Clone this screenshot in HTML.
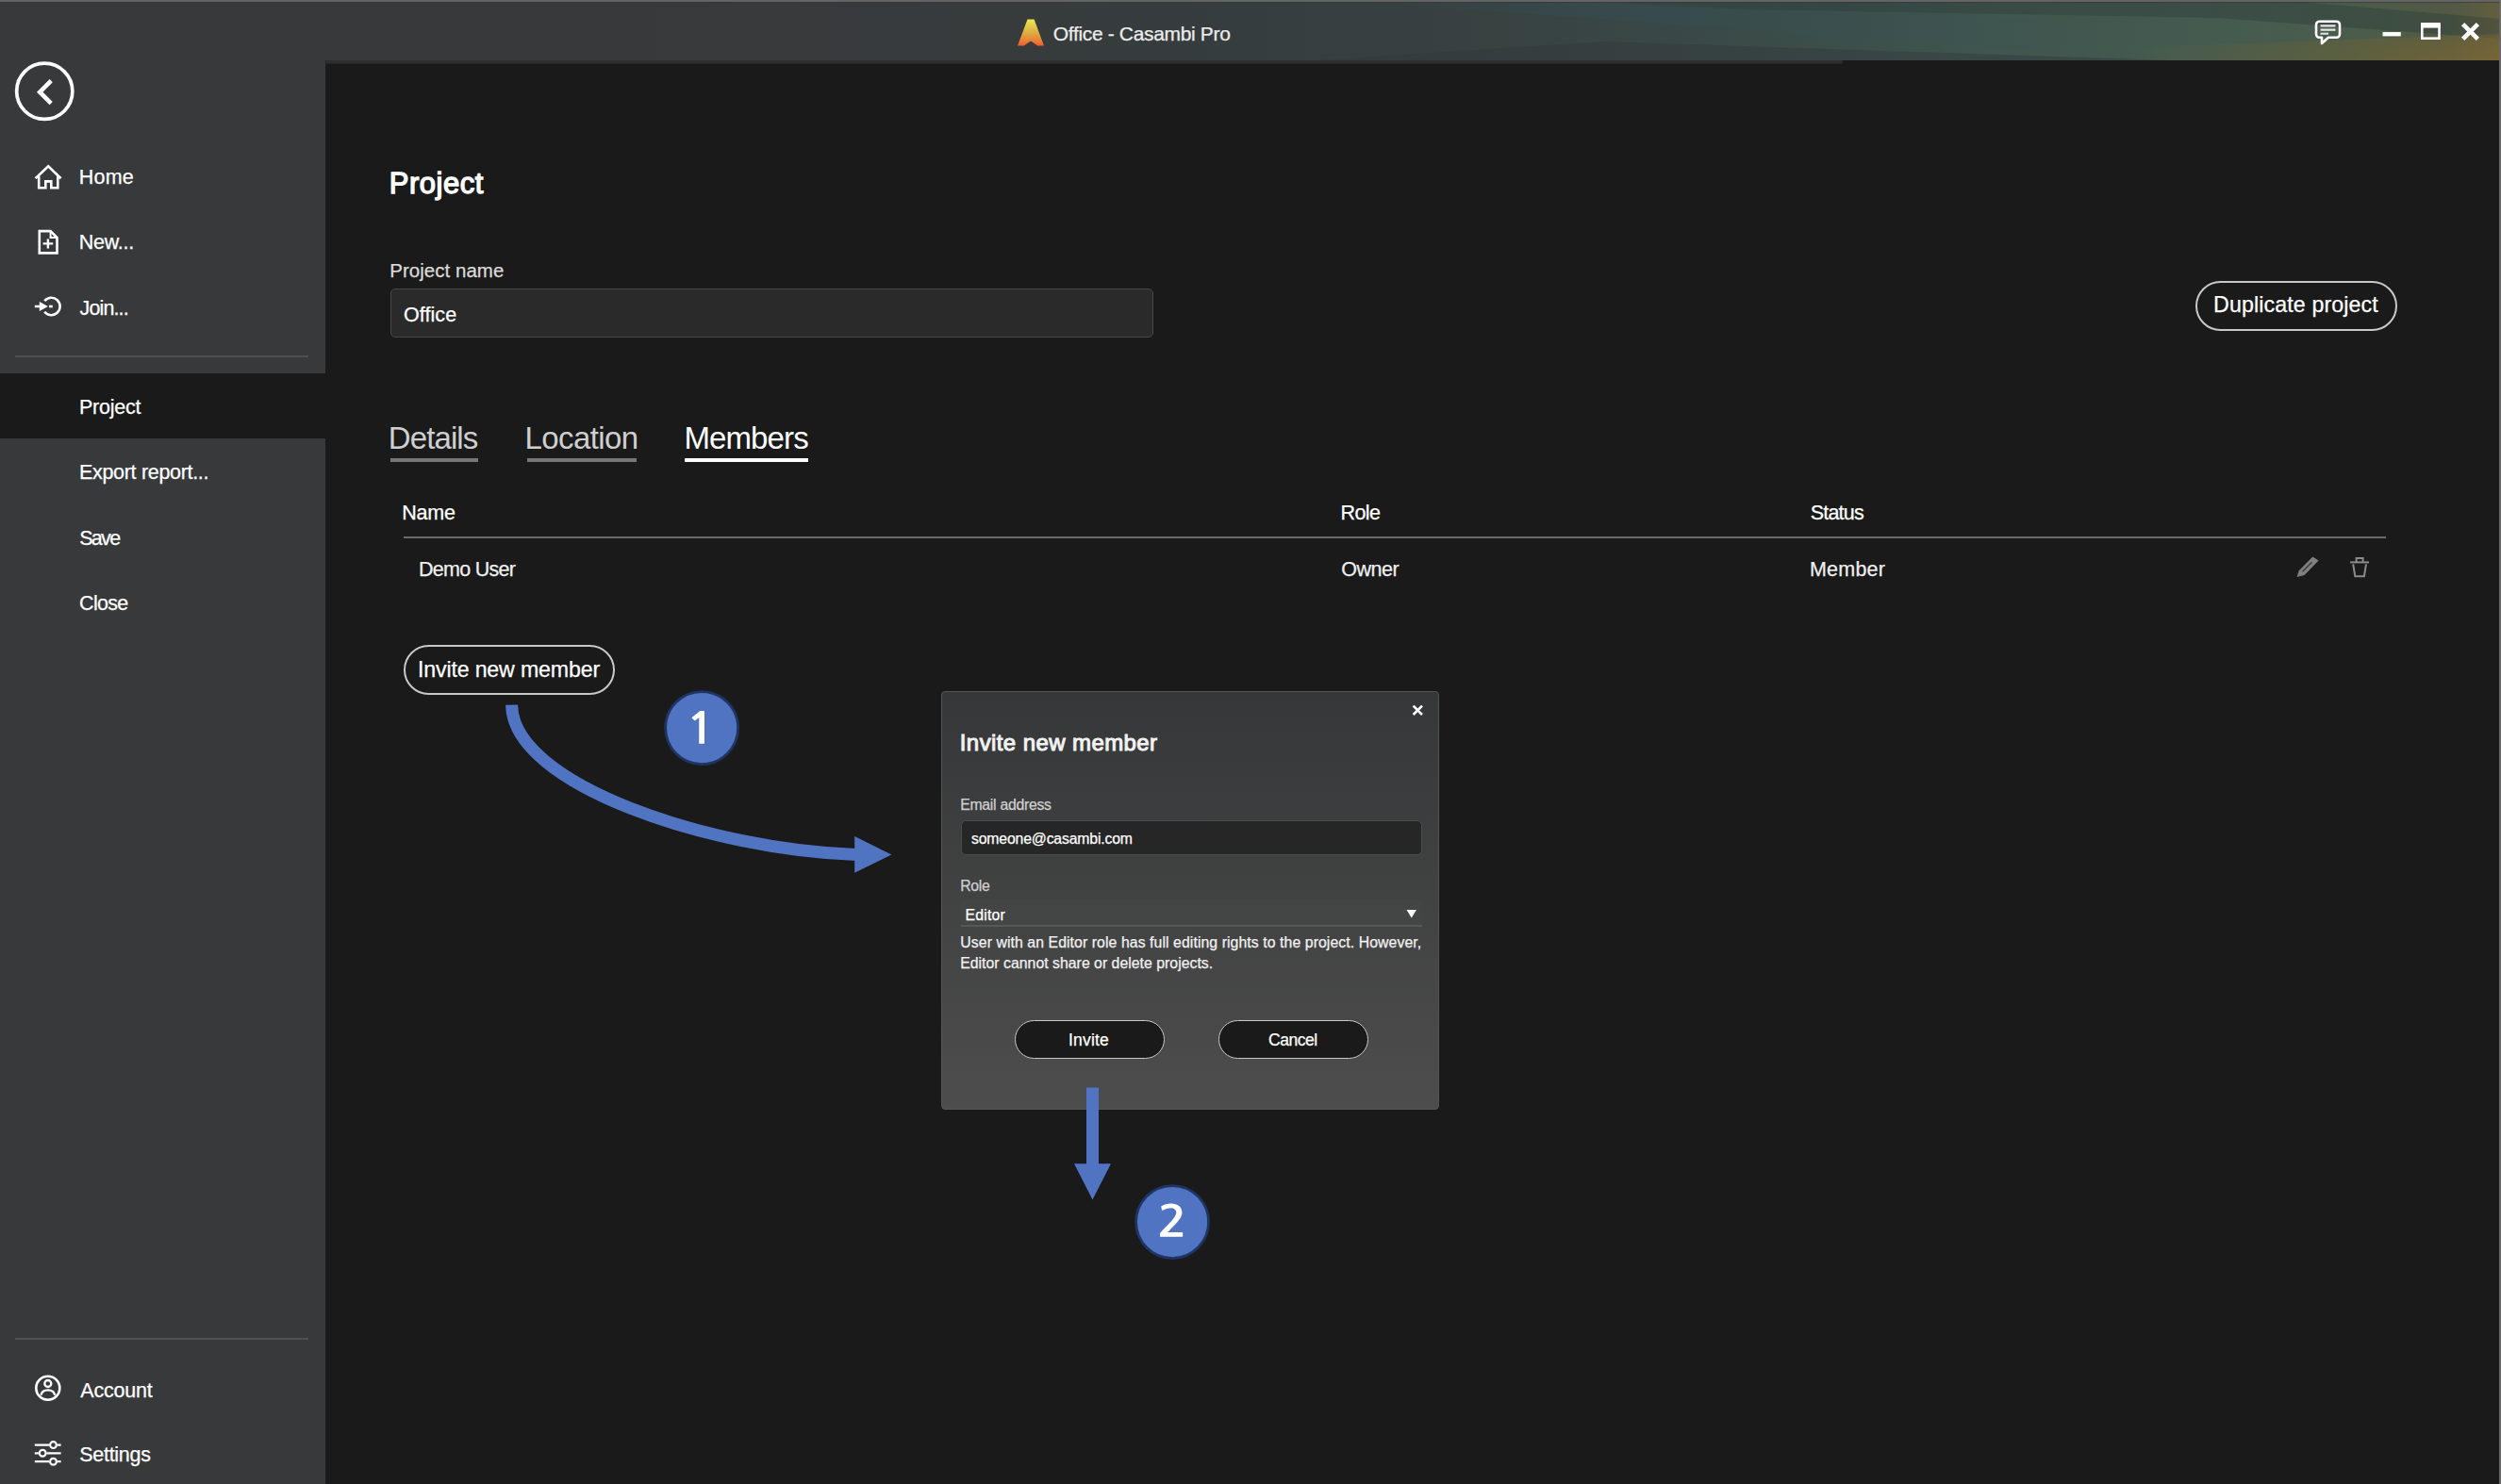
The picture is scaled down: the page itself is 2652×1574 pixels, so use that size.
<!DOCTYPE html>
<html lang="en"><head><meta charset="utf-8"><title>Office - Casambi Pro</title>
<style>
*{box-sizing:border-box}
html,body{margin:0;padding:0}
body{width:2652px;height:1574px;overflow:hidden;background:#1a1a1a;position:relative;font-family:"Liberation Sans", sans-serif;color:#fff}
.abs,.t,svg.ov{position:absolute}
.t{white-space:nowrap;line-height:1;-webkit-text-stroke:0.25px currentColor}
.grp{position:absolute;left:0;top:0;width:0;height:0}
#rborder{left:2649.7px;top:0;width:2.3px;height:1574px;background:#686868}
.lt{-webkit-text-stroke:0}
.sb1{-webkit-text-stroke:1.3px currentColor}
.sb2{-webkit-text-stroke:1px currentColor}
.num{-webkit-text-stroke:0;font-family:NanumGothic,"Liberation Sans",sans-serif;font-weight:bold;font-size:44.6px;transform:scaleX(1.18);transform-origin:0 0}
.sep{height:2px;background:#4f4f50}
.pill{border:2px solid #c9c9c9;border-radius:40px;background:#1a1a1a}
.inp{background:#2a2a2a;border:1.5px solid #484848;border-radius:5px}
</style></head>
<body>
<nav id="sidebar" class="grp" aria-label="Backstage menu">
<div class="abs bg" style="left:0;top:0;width:344.5px;height:1574px;background:#38393b"></div>
<div class="abs sel" style="left:0;top:396px;width:344.5px;height:68.5px;background:#1a1a1a"></div>
<div class="abs sep" style="left:16px;top:377px;width:311px"></div>
<div class="abs sep" style="left:16px;top:1419px;width:311px"></div>
<svg class="ov" style="left:0;top:60px" width="120" height="1514" viewBox="0 60 120 1514">
<g fill="none" stroke="#fff" stroke-width="2.6">
<circle cx="47.25" cy="96.8" r="29.6" stroke-width="3.7"/>
<path d="M54.2,85.7L42.2,97.7L54.2,109.7" stroke-width="4.6"/>
<path d="M37.6,189.2L51.2,176.2L64.6,189.2" stroke-linejoin="miter"/>
<path d="M41.2,186.5V199.3H48.3V192.4H54.3V199.3H61.3V186.5"/>
<path d="M41.8,245.1H53.6L60.5,252V268.4H41.8Z" stroke-linejoin="miter"/>
<path d="M53.6,245.1V252H60.5" stroke-width="2"/>
<path d="M45.6,258.4H56.2M50.9,253.4V263.6" stroke-width="2.4"/>
<path d="M47.2,319.3A9.2,9.2 0 1 1 47.2,330.7"/>
<path d="M36.8,325H44" stroke-width="2.5"/>
<circle cx="50.8" cy="1472.2" r="12.5"/>
<circle cx="50.8" cy="1467.5" r="3.5" stroke-width="2.3"/>
<path d="M43.4,1479.8C44.2,1476.2 47,1474.4 50.8,1474.4C54.6,1474.4 57.4,1476.2 58.2,1479.8" stroke-width="2.3"/>
<path d="M36.8,1532.6H52M61,1532.6H64.6M36.8,1541.3H40.8M49.6,1541.3H64.6M36.8,1550.2H52M61,1550.2H64.6" stroke-width="2.3"/>
<circle cx="56.5" cy="1532.6" r="3.4" stroke-width="2.2"/>
<circle cx="45.2" cy="1541.3" r="3.4" stroke-width="2.2"/>
<circle cx="56.5" cy="1550.2" r="3.4" stroke-width="2.2"/>
</g>
<path d="M41.8,319.9L50.9,325L41.8,330.1Z" fill="#fff"/>
<rect x="52" y="323.7" width="3.8" height="2.6" fill="#fff"/>
</svg>
<span class="t" style="left:83.8px;top:178.4px;font-size:21.5px;letter-spacing:0.197px">Home</span>
<span class="t" style="left:83.8px;top:247.3px;font-size:21.5px;letter-spacing:-0.282px">New...</span>
<span class="t" style="left:84.6px;top:316.7px;font-size:21.5px;letter-spacing:-0.890px">Join...</span>
<span class="t" style="left:84.0px;top:421.9px;font-size:21.5px;letter-spacing:-0.240px">Project</span>
<span class="t" style="left:84.0px;top:491.3px;font-size:21.5px;letter-spacing:-0.317px">Export report...</span>
<span class="t" style="left:84.2px;top:560.5px;font-size:21.5px;letter-spacing:-1.695px">Save</span>
<span class="t" style="left:84.1px;top:629.5px;font-size:21.5px;letter-spacing:-0.697px">Close</span>
<span class="t" style="left:85.3px;top:1464.7px;font-size:21.5px;letter-spacing:-0.201px">Account</span>
<span class="t" style="left:84.3px;top:1533.4px;font-size:21.5px;letter-spacing:-0.300px">Settings</span>
</nav>
<main id="main" class="grp">
<div class="abs bg" style="left:344.5px;top:64px;width:2305.2px;height:1510px;background:#1a1a1a"></div>
<div class="abs inp" style="left:413.5px;top:306px;width:809px;height:52px"></div>
<div class="abs tabline" style="left:413.6px;top:486px;width:93.4px;height:3.6px;background:#777"></div>
<div class="abs tabline" style="left:559px;top:486px;width:116px;height:3.6px;background:#777"></div>
<div class="abs tabline" style="left:726.4px;top:486px;width:130.2px;height:3.6px;background:#fff"></div>
<div class="abs rule" style="left:427.6px;top:569px;width:2102px;height:1.6px;background:#6a6a6a"></div>
<div class="abs pill" style="left:2328px;top:297.5px;width:214px;height:53.5px"></div>
<div class="abs pill" style="left:427.5px;top:684px;width:224.5px;height:53px"></div>
<svg class="ov" style="left:2420px;top:580px" width="110" height="44" viewBox="2420 580 110 44">
<path d="M2435.5,612L2437.8,605.2L2452.3,590.6L2458.6,594.6L2443.5,610Z" fill="#808080"/>
<path d="M2441.5,606.2L2451.5,596.2" stroke="#3a3a3a" stroke-width="1.4"/>
<g fill="none" stroke="#8c8c8c" stroke-width="2">
<path d="M2492.1,596.4H2512"/>
<path d="M2498.6,596V592H2505.6V596"/>
<path d="M2495.2,598.4L2497.3,611.2H2506.9L2509,598.4"/>
</g>
</svg>
<span class="t sb1" style="left:412.8px;top:179.2px;font-size:31px;letter-spacing:0.504px">Project</span>
<span class="t" style="left:413.3px;top:276.7px;font-size:20.5px;letter-spacing:0.020px;color:#dcdcdc">Project name</span>
<span class="t" style="left:428.0px;top:323.8px;font-size:21.5px;letter-spacing:0.068px">Office</span>
<span class="t lt" style="left:411.8px;top:448.0px;font-size:33px;letter-spacing:-0.903px;color:#cfcfcf">Details</span>
<span class="t lt" style="left:556.4px;top:448.0px;font-size:33px;letter-spacing:-0.565px;color:#cfcfcf">Location</span>
<span class="t lt" style="left:725.4px;top:448.0px;font-size:33px;letter-spacing:-0.869px">Members</span>
<span class="t" style="left:426.3px;top:534.0px;font-size:21.5px;letter-spacing:-0.203px">Name</span>
<span class="t" style="left:1421.5px;top:534.0px;font-size:21.5px;letter-spacing:-0.565px">Role</span>
<span class="t" style="left:1919.7px;top:534.0px;font-size:21.5px;letter-spacing:-0.787px">Status</span>
<span class="t" style="left:443.9px;top:593.6px;font-size:21.5px;letter-spacing:-0.705px;color:#f0f0f0">Demo User</span>
<span class="t" style="left:1422.2px;top:593.6px;font-size:21.5px;letter-spacing:-0.455px;color:#f0f0f0">Owner</span>
<span class="t" style="left:1919.0px;top:593.6px;font-size:21.5px;letter-spacing:0.209px;color:#f0f0f0">Member</span>
<span class="t" style="left:2347.1px;top:312.4px;font-size:23.2px;letter-spacing:0.122px">Duplicate project</span>
<span class="t" style="left:443.0px;top:698.6px;font-size:23.2px;letter-spacing:-0.174px">Invite new member</span>
</main>
<header id="titlebar" class="grp">
<div class="abs bg" style="left:0;top:0;width:2652px;height:64px;background:#38393b"></div>
<svg class="ov" style="left:0;top:0" width="2652" height="68" viewBox="0 0 2652 68">
<defs>
<linearGradient id="tbg" x1="0" x2="1" y1="0" y2="0">
<stop offset="0" stop-color="#38393b"/><stop offset="0.25" stop-color="#38393b"/><stop offset="0.40" stop-color="#373b3c"/>
<stop offset="0.50" stop-color="#363d3e"/><stop offset="0.60" stop-color="#374241"/>
<stop offset="0.70" stop-color="#3a4b48"/><stop offset="0.80" stop-color="#40564e"/>
<stop offset="0.88" stop-color="#455b50"/><stop offset="0.94" stop-color="#4a5c4c"/>
<stop offset="0.98" stop-color="#535a45"/><stop offset="1" stop-color="#5f5c3f"/>
</linearGradient>
<radialGradient id="tbo" cx="2660" cy="70" r="420" gradientUnits="userSpaceOnUse" gradientTransform="translate(0 56) scale(1 0.2)">
<stop offset="0" stop-color="#8a6c34" stop-opacity="0.62"/><stop offset="0.45" stop-color="#74642f" stop-opacity="0.4"/><stop offset="1" stop-color="#6a6030" stop-opacity="0"/>
</radialGradient>
<linearGradient id="ray" x1="1450" x2="2300" y1="0" y2="0" gradientUnits="userSpaceOnUse"><stop offset="0" stop-color="#34525c" stop-opacity="0"/><stop offset="0.25" stop-color="#34525c" stop-opacity="0.3"/><stop offset="0.7" stop-color="#34525c" stop-opacity="0.15"/><stop offset="1" stop-color="#34525c" stop-opacity="0"/></linearGradient>
<linearGradient id="redge" x1="2600" x2="2652" y1="0" y2="0" gradientUnits="userSpaceOnUse"><stop offset="0" stop-color="#80663a" stop-opacity="0"/><stop offset="1" stop-color="#80663a" stop-opacity="0.22"/></linearGradient>
<linearGradient id="lg" x1="0" x2="0" y1="0" y2="1"><stop offset="0" stop-color="#e9ea52"/><stop offset="0.5" stop-color="#dcae42"/><stop offset="0.85" stop-color="#ec7a33"/><stop offset="1" stop-color="#f1592a"/></linearGradient>
</defs>
<path d="M0,0H2652V64H0Z" fill="url(#tbg)"/>
<path d="M1450,2L1750,2L2652,40L2652,64L2300,64Z" fill="url(#ray)"/>
<path d="M1700,2L2440,2L2652,20L2652,41L2352,19L1852,10Z" fill="#2f403c" opacity="0.5"/>
<path d="M2440,2L2652,2L2652,20Z" fill="#4f5842" opacity="0.25"/>
<path d="M1400,64L2300,64L1700,44Z" fill="#33383b" opacity="0.45"/>
<rect x="344.4" y="64" width="1609.2" height="3.5" fill="#2e2e2f"/>
<path d="M2652,64H1900L2652,36Z" fill="url(#tbo)"/>
<rect x="2600" y="2" width="52" height="62" fill="url(#redge)"/>
<rect x="0" y="0" width="2652" height="2" fill="#646464"/>
<rect x="0" y="2" width="2652" height="1" fill="#333436" opacity="0.6"/>
<path d="M1089.5,20.4H1096.6L1107,48.6H1100.2L1093,43.4L1085.8,48.6H1079Z" fill="url(#lg)"/>
<g fill="none" stroke="#fff">
<path d="M2459.5,22.7H2477.5a3.5,3.5 0 0 1 3.5,3.5V36.3a3.5,3.5 0 0 1 -3.5,3.5H2469L2462,46V39.8H2459.5a3.5,3.5 0 0 1 -3.5,-3.5V26.2a3.5,3.5 0 0 1 3.5,-3.5Z" stroke-width="2.6" stroke-linejoin="round"/>
<path d="M2460.5,27.3H2476.5M2460.5,31.6H2476.5" stroke-width="2.2" stroke="#e6e6e6"/>
<path d="M2460.5,35.7H2469" stroke-width="2" stroke="#e6e6e6"/>
<path d="M2611.6,25.6L2627.4,41.4M2627.4,25.6L2611.6,41.4" stroke-width="4.6"/>
<rect x="2568.3" y="27.5" width="18.2" height="13.2" stroke-width="2.6"/>
</g>
<rect x="2526.5" y="34" width="19.3" height="4.4" fill="#fff"/>
<rect x="2567" y="24" width="20.8" height="5.6" fill="#fff"/>
</svg>
<span class="t" style="left:1116.8px;top:25.4px;font-size:21px;letter-spacing:-0.341px;color:#ececec">Office - Casambi Pro</span>
</header>
<div id="rborder" class="abs"></div>
<section id="dialog" class="grp" role="dialog" aria-label="Invite new member">
<div class="abs panel" style="left:998px;top:733px;width:528px;height:444px;border:1px solid #555;border-radius:4px;background:linear-gradient(#363738,#4d4d4d)"></div>
<div class="abs field" style="left:1019px;top:869.5px;width:488.5px;height:37.5px;background:#262626;border:1px solid #4c4c4c;border-radius:5px"></div>
<div class="abs" style="left:1019px;top:955px;width:489px;height:26px;background:rgba(255,255,255,.012)"></div>
<div class="abs" style="left:1019px;top:981px;width:489px;height:2px;background:#575757"></div>
<div class="abs pill" style="left:1075.5px;top:1082.2px;width:159px;height:40.8px;border-width:1.5px"></div>
<div class="abs pill" style="left:1292.2px;top:1082.2px;width:159px;height:40.8px;border-width:1.5px"></div>
<svg class="ov" style="left:1480px;top:740px" width="40" height="240" viewBox="1480 740 40 240">
<path d="M1491.5,965H1502L1496.75,973.4Z" fill="#fff"/>
<path d="M1498.6,748.6L1508,758M1508,748.6L1498.6,758" stroke="#fff" stroke-width="2.6"/>
</svg>
<span class="t sb2" style="left:1017.8px;top:776.2px;font-size:24px;letter-spacing:0.409px;color:#f2f2f2">Invite new member</span>
<span class="t" style="left:1018.2px;top:846.0px;font-size:15.8px;letter-spacing:-0.273px;color:#d0d0d0">Email address</span>
<span class="t" style="left:1030.0px;top:882.0px;font-size:15.8px;letter-spacing:-0.173px">someone@casambi.com</span>
<span class="t" style="left:1018.2px;top:932.4px;font-size:15.8px;letter-spacing:-0.265px;color:#d0d0d0">Role</span>
<span class="t" style="left:1023.5px;top:962.7px;font-size:15.8px;letter-spacing:0.193px">Editor</span>
<span class="t" style="left:1018.3px;top:991.8px;font-size:15.8px;letter-spacing:0.082px;color:#f2f2f2">User with an Editor role has full editing rights to the project. However,</span>
<span class="t" style="left:1018.2px;top:1013.6px;font-size:15.8px;letter-spacing:0.027px;color:#f2f2f2">Editor cannot share or delete projects.</span>
<span class="t" style="left:1133.0px;top:1095.0px;font-size:17.5px;letter-spacing:0.188px">Invite</span>
<span class="t" style="left:1345.1px;top:1095.0px;font-size:17.5px;letter-spacing:-0.483px">Cancel</span>
</section>
<div id="annotations" class="grp">
<svg class="ov" style="left:500px;top:720px" width="820" height="630" viewBox="500 720 820 630">
<path d="M542.6,747.6C543.2,832.7 756.1,901.8 908,906.4" fill="none" stroke="#5073c2" stroke-width="13"/>
<path d="M906.2,887.1L945.4,906.6L906.2,925.8Z" fill="#5073c2"/>
<path d="M1152,1153.4H1165V1234.2H1178L1158.5,1272.4L1139,1234.2H1152Z" fill="#5073c2"/>
<circle cx="744.1" cy="772.05" r="38.5" fill="#5073c2" stroke="#1f3460" stroke-width="2.8"/>
<circle cx="1243.1" cy="1296.05" r="38.5" fill="#5073c2" stroke="#1f3460" stroke-width="2.8"/>
</svg>
<span class="t num" style="left:727.4px;top:751.7px">1</span><span class="t num" style="left:1226.8px;top:1275.4px">2</span>
</div>
</body></html>
